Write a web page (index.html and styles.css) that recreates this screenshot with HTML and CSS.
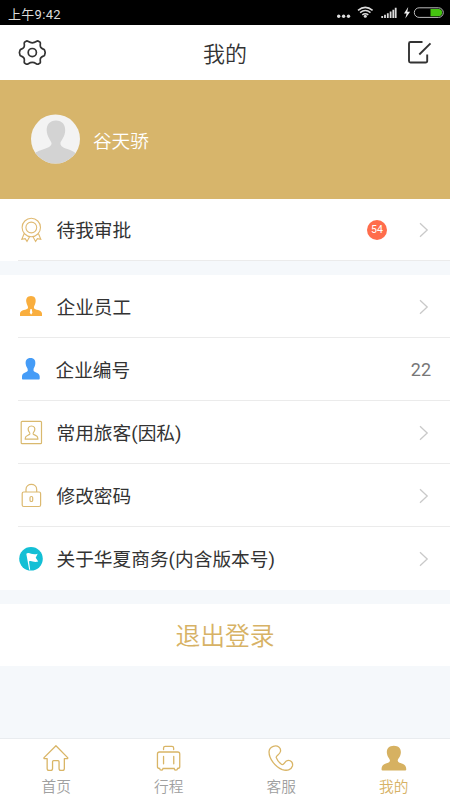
FILE: index.html
```html
<!DOCTYPE html>
<html lang="zh-CN">
<head>
<meta charset="utf-8">
<title>我的</title>
<link rel="stylesheet" href="styles.css">
</head>
<body>
<div class="status">
  <span class="time">上午9:42</span>
  <svg width="114" height="25" viewBox="336 0 114 25">
    <g fill="#ddd"><circle cx="338.7" cy="16.2" r="1.7"/><circle cx="343.6" cy="16.2" r="1.7"/><circle cx="348.5" cy="16.2" r="1.7"/><circle cx="365.3" cy="16.3" r="1.5"/></g>
    <g fill="none" stroke="#ddd" stroke-width="1.5"><path d="M358 10.4q7.300-6.100 14.600 0M360.100 12.700q5.200-4.200 10.400 0M362.300 14.900q3-2.400 6 0"/></g>
    <path d="M382.200 18v-2M385 18v-3.300M387.800 18v-4.800M390.600 18V11.500M393.300 18V9.800M395.700 18V7.800" stroke="#ddd" stroke-width="1.800"/>
    <path d="M408.200 7l-4.200 6.500h2.600l-1.300 5 4.800-6.800h-2.800z" fill="#eee"/>
    <rect x="414.300" y="7.800" width="29" height="9.600" rx="4.800" fill="none" stroke="#bbb"/>
    <path d="M430.500 9h8a3.600 3.600 0 0 1 0 7.200h-8z" fill="#45c510"/>
  </svg>
</div>
<header class="header">
  <svg width="28" height="28" viewBox="18 39 28 28" fill="none" stroke="#333" stroke-width="1.700" stroke-linejoin="round">
    <path d="M26.500 41C28 40.400 28.700 42.800 32.300 42.800S36.600 40.400 38.100 41L40.100 42.200C41 43.200 39.500 45.300 40.700 47.200S43.800 49 44.500 49.900L45.200 52.600L44.500 55.400C43.800 56.300 41.900 56 40.700 58S41 62 40.100 63L38.100 64.200C36.600 64.800 35.900 62.400 32.300 62.400S28 64.800 26.500 64.200L24.500 63C23.600 62 25.100 60 23.900 58S20.800 56.300 20.100 55.400L19.400 52.600L20.100 49.900C20.800 49 22.700 49.200 23.900 47.200S23.600 43.200 24.500 42.200Z"/>
    <circle cx="32.300" cy="52.600" r="4.100"/>
  </svg>
  <h1>我的</h1>
  <svg width="28" height="28" viewBox="405 39 28 28" fill="none" stroke="#333" stroke-width="1.900">
    <path d="M422.500 42H410.500Q409 42 409 43.500V61Q409 62.500 410.500 62.500H425.500Q427.200 62.500 427.200 61V54.500M419.300 54.500L430.500 43.400"/>
  </svg>
</header>
<section class="profile">
  <svg width="50" height="50" viewBox="0 0 50 50">
    <defs><clipPath id="disc"><circle cx="24.500" cy="25" r="24.500"/></clipPath></defs>
    <circle cx="24.500" cy="25" r="24.500" fill="#f3f3f3"/>
    <path clip-path="url(#disc)" fill="#d3d3d3" d="M25 6.500C31.200 6.500 34.400 10.800 34.200 16.500C34 23 30.200 26 29.400 29C28.600 34.500 39 34.500 44.500 39V50H4V39C9.500 35 21.200 34.500 20.500 29C19.700 26 16 23 15.700 16.500C15.500 10.800 18.800 6.500 25 6.500Z"/>
  </svg>
  <span>谷天骄</span>
</section>
<main>
  <section class="group">
    <div class="row first">
      <svg class="icon" viewBox="18 217 26 26" fill="none" stroke="#e0ba72" stroke-width="1.100">
        <circle cx="31.300" cy="227.500" r="9.200"/><circle cx="31.300" cy="227.500" r="5.400"/>
        <path d="M24.200 233.500L21.800 239.300L25.200 238.700L27 241.400L29.600 236.800M38.400 233.500L40.800 239.300L37.400 238.700L35.600 241.400L33 236.800"/>
      </svg>
      <span class="label">待我审批</span><span class="badge">54</span>
      <svg class="arrow" viewBox="0 0 10 16"><path d="M1 1.200L8.200 8L1 14.800"/></svg>
    </div>
  </section>
  <section class="group">
    <div class="row">
      <svg class="icon" viewBox="18 294 26 26"><path fill="#f9ae3e" d="M31 296C34.800 296 36.200 298.800 35.600 302C35.200 305 33.500 306 34 308C34.500 310.300 41.800 309.500 42 313.500V316H20V313.500C20.200 309.500 27.300 310.300 28 308C28.300 306 26.800 305 26.300 302C25.700 298.800 27.200 296 31 296Z"/><path d="M30.400 309h1.300l.7 3.800-1.300 1.900-1.300-1.900z" fill="#fff"/></svg>
      <span class="label">企业员工</span>
      <svg class="arrow" viewBox="0 0 10 16"><path d="M1 1.200L8.200 8L1 14.800"/></svg>
    </div>
    <div class="row">
      <svg class="icon" viewBox="18 357 26 26"><path fill="#459cf7" d="M30.500 358C34.300 358 35.700 360.500 35.300 364C35 367 33.200 368 33.500 370.500C34 373 39.500 372 39.700 376.500V378.800Q39.700 379.600 38.900 379.600H22.800Q22 379.600 22 378.800V376.500C22.200 372 27.300 373 27.800 370.500C28 368 26 367 25.700 364C25.300 360.500 26.700 358 30.500 358Z"/></svg>
      <span class="label shifted">企业编号</span><span class="value">22</span>
    </div>
    <div class="row">
      <svg class="icon" viewBox="18 420 26 26" fill="none" stroke="#d9b96e" stroke-width="1.200"><rect x="21.200" y="421.300" width="20.300" height="22.400" rx="1"/><path d="M31.500 426C34.200 426 35.200 428 34.700 430.100C34.300 432 32.800 432.500 33.200 434C33.700 435.500 37.800 435 37.800 438V439.100H25.300V438C25.300 435 29.300 435.500 29.800 434C30.200 432.500 28.700 432 28.300 430.100C27.800 428 28.800 426 31.500 426Z"/></svg>
      <span class="label">常用旅客(因私)</span>
      <svg class="arrow" viewBox="0 0 10 16"><path d="M1 1.200L8.200 8L1 14.800"/></svg>
    </div>
    <div class="row">
      <svg class="icon" viewBox="18 483 26 26" fill="none" stroke="#dcb970" stroke-width="1.200"><rect x="22.200" y="492" width="18.400" height="14.500" rx="1.500"/><path d="M26 492V489.500C26 482.700 36.700 482.700 36.700 489.500V492"/><rect x="30" y="496.500" width="2.700" height="5" rx="1.300"/></svg>
      <span class="label">修改密码</span>
      <svg class="arrow" viewBox="0 0 10 16"><path d="M1 1.200L8.200 8L1 14.800"/></svg>
    </div>
    <div class="row">
      <svg class="icon" viewBox="18 546 26 26"><circle cx="31" cy="558.800" r="11.800" fill="#13bfd5"/><path fill="#fff" d="M26.300 553.800L27.300 553.200C30 552 32 555.500 37.700 553.700L35.700 557.800L38.200 561.500C33.500 563 31.500 560 29 561.500L30.200 569.800H29.200Z"/></svg>
      <span class="label">关于华夏商务(内含版本号)</span>
      <svg class="arrow" viewBox="0 0 10 16"><path d="M1 1.200L8.200 8L1 14.800"/></svg>
    </div>
  </section>
  <button class="logout">退出登录</button>
</main>
<nav class="tabs">
  <a class="tab"><svg viewBox="42.250 744 28 28" fill="none" stroke="#d9b566" stroke-width="1.300" stroke-linejoin="round"><path d="M56.200 745.800L44.300 757.600Q43.800 758.600 45 758.700H47.400V768.500Q47.400 770.400 49.300 770.400H51Q52.800 770.400 52.800 768.500V761.700Q52.800 760.700 53.800 760.700H58.300Q59.300 760.700 59.300 761.700V768.500Q59.300 770.400 61.200 770.400H62.700Q64.600 770.400 64.600 768.500V758.700H67.200Q68.400 758.600 67.900 757.600Z"/></svg><span>首页</span></a>
  <a class="tab"><svg viewBox="154.750 744 28 28" fill="none" stroke="#d9b566" stroke-width="1.300" stroke-linecap="round"><path d="M159.300 752H177.500Q179.500 752 179.500 754V766.800Q179.500 768.500 177.300 768.500Q177.200 770.200 175.700 770.200Q174.300 770.200 173.900 768.500H162.800Q162.400 770.200 161 770.200Q159.500 770.200 159.400 768.500Q157.200 768.500 157.200 766.800V754Q157.200 752 159.300 752Z"/><path d="M163.300 749.500V748Q163.300 746.300 165 746.300H171.700Q173.400 746.300 173.400 748V749.500M163.300 756.500V763.800M173.500 756.500V763.800"/></svg><span>行程</span></a>
  <a class="tab"><svg viewBox="267.250 744 28 28" fill="none" stroke="#d9b566" stroke-width="1.300" stroke-linejoin="round"><path d="M273.500 746.300C278 744.700 281.500 748 280.700 751.500C280.200 754.600 275.900 755.400 276.500 757.600Q278 761.800 282 764.500C284.500 765.500 284.800 761.200 287.500 760.600C291.200 759.700 293.500 762.800 292.700 766C291.500 769.800 287.400 771.200 282.500 769.600C275.500 767 269 758.500 269.300 751.500Q269.600 747.800 273.500 746.300Z"/></svg><span>客服</span></a>
  <a class="tab active"><svg viewBox="379.750 744 28 28" fill="#d6b161"><path d="M393.600 745.700C399 745.700 401.200 749.300 400.500 753.400C400 757.300 397.300 758.700 397.500 760.800C398 764.200 406 762.500 406 769V769.500Q406 770.500 405 770.500H382.300Q381.300 770.500 381.300 769.500V769C381.300 762.500 389.200 764.200 389.700 760.800C389.900 758.700 387.200 757.300 386.700 753.400C386 749.300 388.200 745.700 393.600 745.700Z"/></svg><span>我的</span></a>
</nav>
</body>
</html>
```
FILE: styles.css
```css
* { box-sizing: border-box; }
body {
  margin: 0;
  width: 450px;
  height: 800px;
  display: flex;
  flex-direction: column;
  overflow: hidden;
  background: #f5f8fb;
  color: #333;
  font-family: Roboto, "Noto Sans CJK SC", sans-serif;
  font-weight: 350;
}
svg { display: block; flex: none; }
.status {
  height: 25px;
  flex: none;
  background: #000;
  color: #ddd;
  display: flex;
  align-items: center;
  justify-content: space-between;
  padding: 0 0 0 8px;
  font-size: 13px;
  font-weight: 400;
  letter-spacing: 0.3px;
}
.time { padding-top: 1px; }
.header {
  height: 55px;
  flex: none;
  background: #fff;
  display: flex;
  align-items: center;
  justify-content: space-between;
  padding: 1px 17px 0 18px;
}
h1 { margin: 0; padding: 3px 1px 0 0; font-size: 22px; font-weight: 350; line-height: 32px; }
.profile {
  height: 119px;
  flex: none;
  background: #d7b56b;
  color: #fff;
  display: flex;
  align-items: center;
  gap: 12px;
  padding: 0 0 1px 31px;
  font-size: 18.6px;
}
main { flex: 1; }
.group { background: #fff; margin-bottom: 14px; }
.row {
  height: 63px;
  display: flex;
  align-items: center;
  padding: 0 21px 0 18px;
  background: linear-gradient(#ebebeb, #ebebeb) 18px 100% / 100% 1px no-repeat;
}
.row.first { height: 62px; }
.group:nth-child(2) .row:last-child { background: none; }
.icon { width: 26px; height: 26px; }
.label { flex: 1; margin-left: 12.5px; padding-top: 2px; font-size: 18.7px; font-weight: 400; line-height: 28px; }
.label.shifted { margin-left: 11.5px; }
.arrow { width: 10px; height: 16px; fill: none; stroke: #c9c9c9; stroke-width: 1.3; }
.badge {
  width: 20px;
  height: 20px;
  margin-right: 32px;
  border-radius: 50%;
  background: #ff6d4c;
  color: #fff;
  font-size: 10.5px;
  font-weight: 400;
  line-height: 20px;
  text-align: center;
}
.value { margin-right: -2px; color: #777; font-size: 18px; font-weight: 400; }
.logout {
  display: block;
  width: 100%;
  height: 62px;
  padding: 4px 0 0;
  border: 0;
  background: #fff;
  color: #d7b265;
  font: 350 24.8px/58px Roboto, "Noto Sans CJK SC", sans-serif;
}
.tabs {
  height: 62px;
  flex: none;
  display: flex;
  background: #fff;
  border-top: 1px solid #e9ecef;
}
.tab {
  flex: 1;
  display: flex;
  flex-direction: column;
  align-items: center;
  padding-top: 5px;
  color: #a0a0a0;
  font-size: 14.7px;
  line-height: 22px;
}
.tab svg { width: 28px; height: 28px; }
.tab span { margin-top: 4px; }
.tab.active { color: #d7b265; }
```
